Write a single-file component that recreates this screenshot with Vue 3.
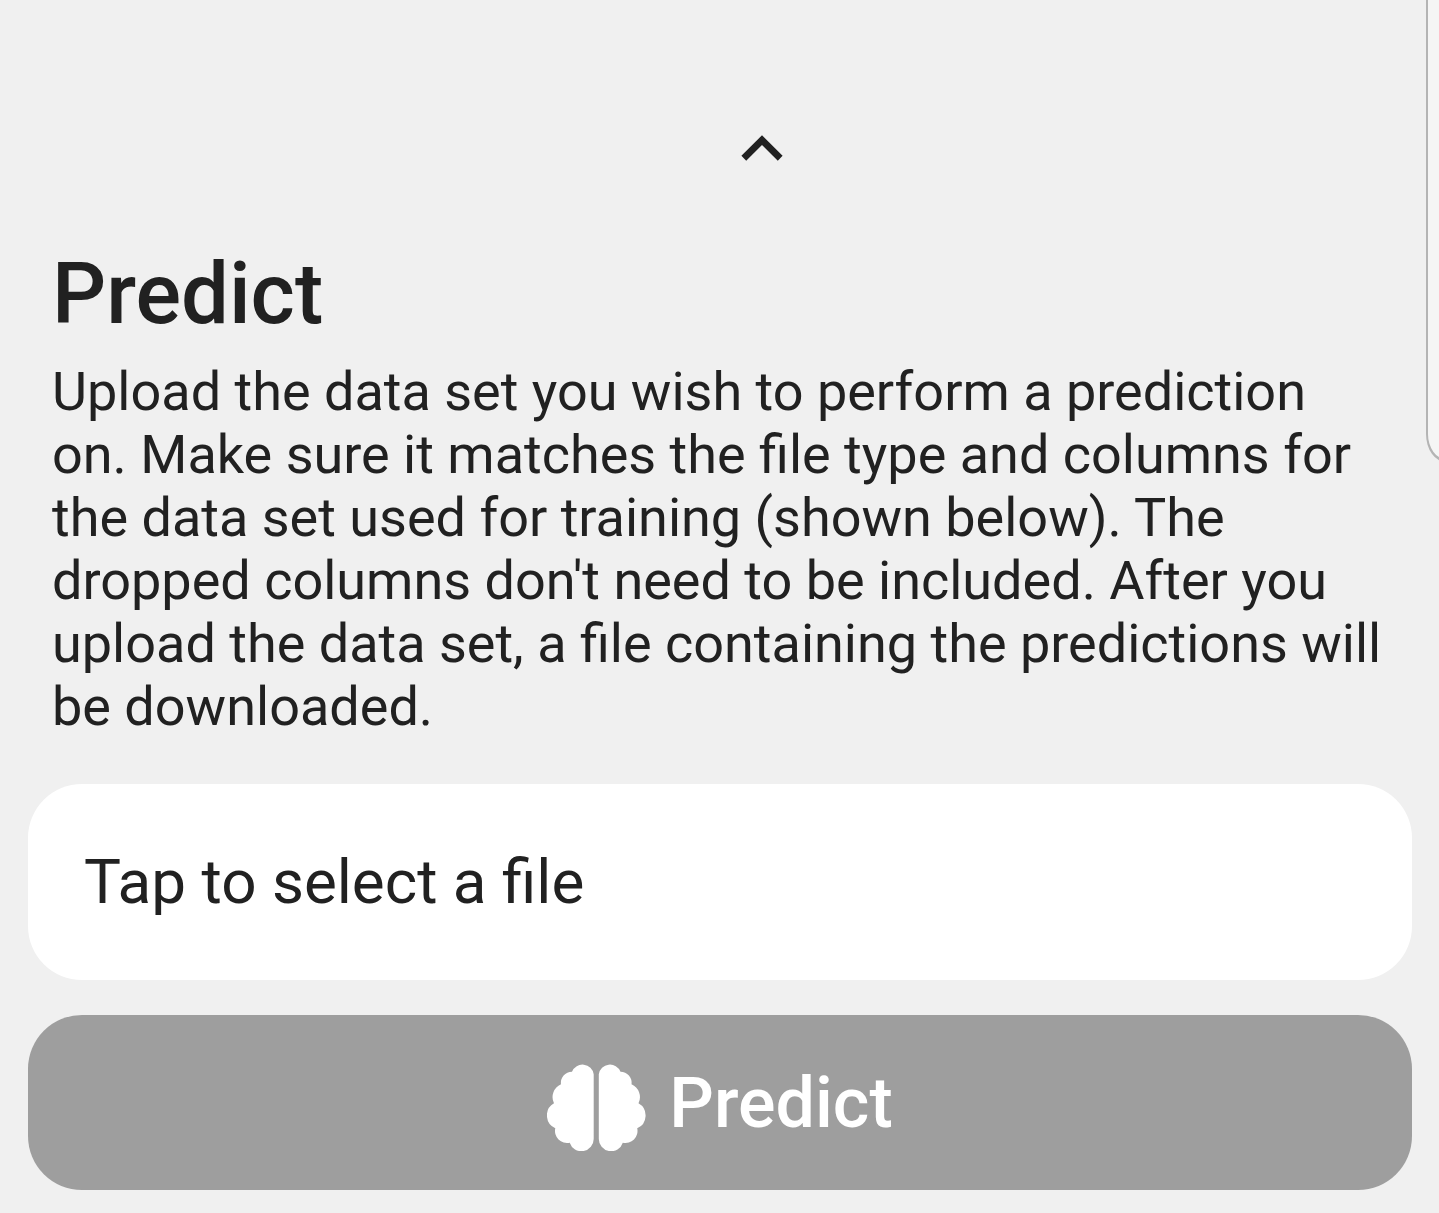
<script setup>
import { ref } from 'vue'

const fileName = ref('')
const onPick = (e) => {
  fileName.value = e.target.files[0]?.name ?? ''
}

// One hemisphere; the other is its mirror image.
const lobe =
  'M46.700 11.300A11.300 11.300 0 0 0 25 8.700A11 11 0 0 0 14 21.300A14 14 0 0 0 7 40.300A14 14 0 0 0 8.300 65.300A12 12 0 0 0 22.700 79.700A12.300 12.300 0 0 0 46.700 75.700Z'
</script>

<template>
  <main class="screen">
    <div class="next-card" aria-hidden="true"></div>
    <button class="collapse" type="button" aria-label="Collapse">
      <svg viewBox="0 0 42 26" width="42" height="26">
        <path d="M21 0.300L41.600 20.800L36.800 25.700L21 10L5.200 25.700L0.400 20.800Z" fill="#212121" />
      </svg>
    </button>
    <section class="intro">
      <h1>Predict</h1>
      <p>
        Upload the data set you wish to perform a prediction on. Make sure it matches the file type
        and columns for the data set used for training (shown below). The dropped columns don't need
        to be included. After you upload the data set, a file containing the predictions will be
        downloaded.
      </p>
    </section>
    <label class="picker" for="dataset">
      {{ fileName || 'Tap to select a file' }}
      <input id="dataset" class="file-input" type="file" @change="onPick" />
    </label>
    <button class="predict" type="button" :disabled="!fileName">
      <svg viewBox="0 -8 99 96" width="99" height="96" fill="#fff" aria-hidden="true">
        <path :d="lobe" />
        <path :d="lobe" transform="translate(98.500 0) scale(-1 1)" />
      </svg>
      <span>Predict</span>
    </button>
  </main>
</template>

<style>
body {
  background: #f0f0f0;
}
</style>

<style scoped>
.screen {
  position: relative;
  overflow: hidden;
  box-sizing: border-box;
  min-height: 100vh;
  padding: 108px 27px 22px 28px;
  display: flex;
  flex-direction: column;
  font-family: Roboto, sans-serif;
  color: #212121;
  background: #f0f0f0;
}
.next-card {
  position: absolute;
  top: -40px;
  right: -47px;
  box-sizing: border-box;
  width: 60px;
  height: 502px;
  border: 2px solid #b4b4b4;
  border-bottom-width: 3px;
  border-radius: 20px / 28px;
  background: #f5f5f5;
}
button {
  border: 0;
  padding: 0;
  font-family: inherit;
}
.collapse {
  display: flex;
  align-items: center;
  justify-content: center;
  width: 84px;
  height: 80px;
  margin-left: 692px;
  background: none;
}
.intro {
  padding: 56px 24px 0;
}
h1 {
  margin: 0;
  font-size: 85px;
  line-height: 100px;
  font-weight: 500;
}
p {
  margin: 16px 0 0;
  font-size: 54px;
  line-height: 63px;
}
.picker {
  display: flex;
  align-items: center;
  height: 196px;
  margin-top: 46px;
  padding-left: 56px;
  border-radius: 54px;
  background: #fff;
  font-size: 62px;
  line-height: 72px;
}
.file-input {
  position: absolute;
  width: 1px;
  height: 1px;
  opacity: 0;
}
.predict {
  display: flex;
  align-items: center;
  justify-content: center;
  gap: 23px;
  height: 175px;
  margin-top: 35px;
  border-radius: 54px;
  background: #9e9e9e;
  color: #fff;
  font-size: 70px;
  line-height: 82px;
  font-weight: 500;
}
</style>
